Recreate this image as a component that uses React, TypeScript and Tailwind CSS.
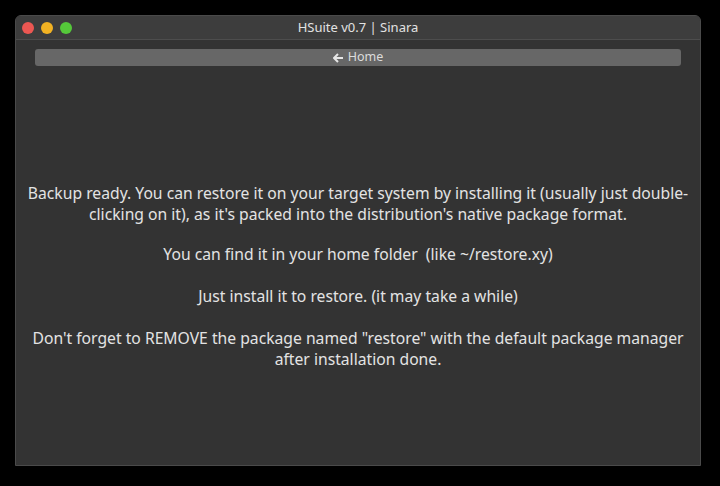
export default function App() {
  return (
    <div className="w-[720px] h-[486px] bg-black pt-[15px] pl-[15px] font-['Noto_Sans',sans-serif]">
      <div className="w-[686px] h-[451px] flex flex-col bg-[#333333] border border-[#4a4a4a] rounded-t-[6px] overflow-hidden">
        {/* title bar */}
        <div className="relative h-[24px] shrink-0 flex items-center justify-center bg-[#3d3d3d] border-b border-[#4d4d4d]">
          <div className="absolute left-[6px] top-[6px] flex gap-[7px]">
            <span className="w-[12px] h-[12px] rounded-full bg-[#ec5752]" />
            <span className="w-[12px] h-[12px] rounded-full bg-[#f2b223]" />
            <span className="w-[12px] h-[12px] rounded-full bg-[#55c83a]" />
          </div>
          <span className="text-[13px] text-[#e2e2e2]">HSuite v0.7 | Sinara</span>
        </div>

        {/* content */}
        <div className="flex-1 flex flex-col px-[19px] pt-[9px]">
          <button className="h-[17px] w-full rounded-[3px] bg-[#676767] flex items-center justify-center gap-[4px] text-[12.5px] text-[#dcdcdc]">
            <svg width="11" height="10" viewBox="0 0 11 10" fill="none">
              <path d="M5 1L1 5l4 4M1 5h9" stroke="#e6e6e6" strokeWidth="2" strokeLinejoin="round" />
            </svg>
            <span className="leading-none">Home</span>
          </button>

          <div className="-mx-[12px] mt-[117px] text-center text-[15.7px] leading-[21px] text-[#e3e3e3]">
            <p>
              <span className="whitespace-nowrap">
                Backup ready. You can restore it on your target system by installing it (usually just double-
              </span>
              <br />
              clicking on it), as it's packed into the distribution's native package format.
            </p>
            <p className="mt-[19px]">You can find it in your home folder&nbsp; (like ~/restore.xy)</p>
            <p className="mt-[21px]">Just install it to restore. (it may take a while)</p>
            <p className="mt-[21px]">
              <span className="whitespace-nowrap">
                Don't forget to REMOVE the package named "restore" with the default package manager
              </span>
              <br />
              after installation done.
            </p>
          </div>
        </div>
      </div>
    </div>
  )
}
